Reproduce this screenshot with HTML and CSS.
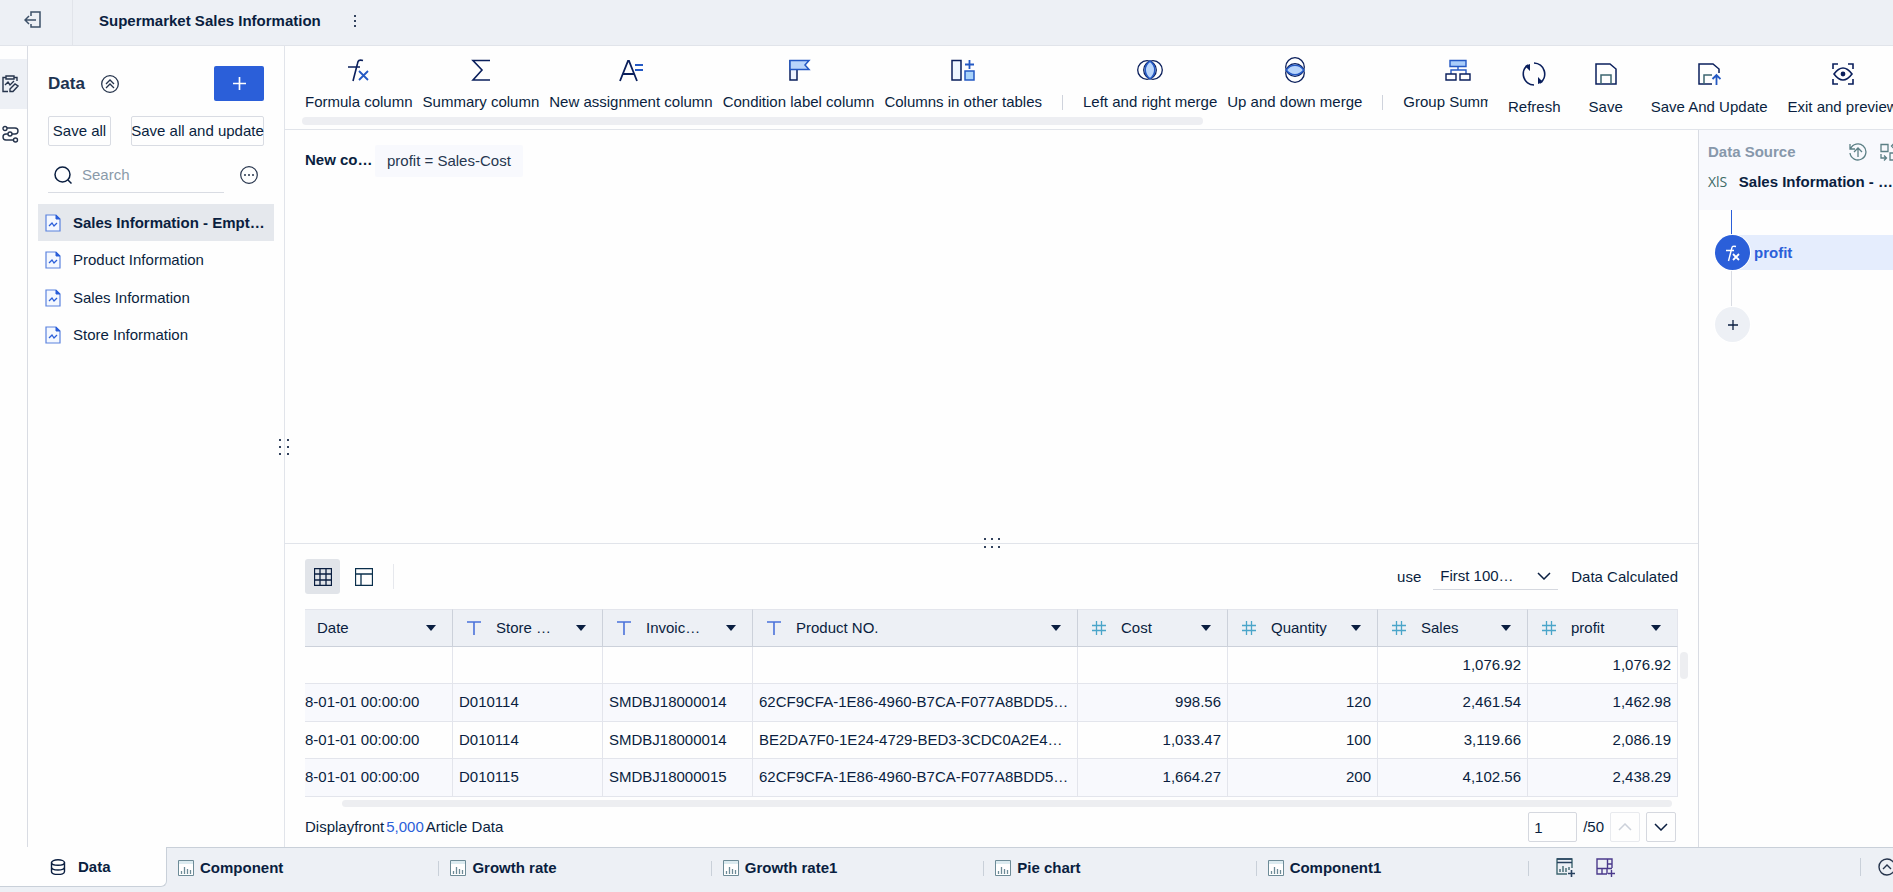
FILE: index.html
```html
<!DOCTYPE html>
<html lang="en">
<head>
    <meta charset="UTF-8">
    <meta name="viewport" content="width=device-width, initial-scale=1.0">
    <title>Supermarket Sales Information</title>
    <link rel="stylesheet" href="styles.css">
</head>
<body>
    <!-- shared icons -->
    <svg class="sprite" aria-hidden="true">
        <symbol id="i-file" viewBox="0 0 16 18"><path d="M1 1h10l4 4v12H1z" fill="#f4f8ff" stroke="#5a82de" stroke-width="1.2"/><path d="M11 1v4h4z" fill="#2b5fd9" stroke="#2b5fd9"/><path d="M4 12l3-3 2 3 3-3" fill="none" stroke="#2b5fd9" stroke-width="1.3"/></symbol>
        <symbol id="i-chart" viewBox="0 0 16 16"><path d="M.5.5h15v15H.5z" fill="#fff" stroke="#6d8b97"/><path d="M1 1h14v3H1z" fill="#dcebf0"/><path d="M3.5 14v-3M6.5 14V7M9.5 14V9M12.5 14v-4" stroke="#6d8b97" stroke-width="1.3"/></symbol>
        <symbol id="i-text" viewBox="0 0 14 14"><path d="M0 1h14M7 1v13" fill="none" stroke="#4a72da" stroke-width="1.6"/></symbol>
        <symbol id="i-num" viewBox="0 0 14 14"><path d="M0 4.500h14M0 9.500h14M4.500 0v14M9.500 0v14" fill="none" stroke="#4aa5c9" stroke-width="1.3"/></symbol>
        <symbol id="i-down" viewBox="0 0 14 8"><path d="M1 1l6 6 6-6" fill="none" stroke="currentColor" stroke-width="1.5"/></symbol>
        <symbol id="i-plus" viewBox="0 0 14 14"><path d="M7 0v14M0 7h14" stroke="currentColor" stroke-width="1.8"/></symbol>
        <symbol id="i-grip" viewBox="0 0 16 10"><path d="M0 0h2v2H0zM7 0h2v2H7zM14 0h2v2h-2zM0 8h2v2H0zM7 8h2v2H7zM14 8h2v2h-2z" fill="#33435e"/></symbol>
    </svg>

    <header class="topbar">
        <button class="exit" aria-label="Exit"><svg width="17" height="18" viewBox="0 0 17 18" fill="none" stroke="#3d5068" stroke-width="1.5"><path d="M7 5V1h9v15H7v-3M1 9h11M5 5L1 9l4 4"/></svg></button>
        <h1>Supermarket Sales Information</h1>
        <button class="more" aria-label="More"><svg width="4" height="12" viewBox="0 0 4 12" fill="#33435e"><path d="M1 0h2v2H1zM1 5h2v2H1zM1 10h2v2H1z"/></svg></button>
    </header>

    <div class="main">
        <nav class="rail">
            <button class="rail-item active" aria-label="Edit data"><svg width="17" height="18" viewBox="0 0 17 18" fill="none" stroke="#26344c" stroke-width="1.4"><path d="M6 16.500H1v-14h3M12 2.500h3V6M4 1h8v3H4zM3 10l3-3 2 3 4-4M8 14l5-5 3 2-5 5.500H8z"/></svg></button>
            <button class="rail-item" aria-label="Lineage"><svg width="17" height="18" viewBox="0 0 17 18" fill="none" stroke="#26344c" stroke-width="1.4"><circle cx="3" cy="3.500" r="2"/><circle cx="8" cy="9" r="2"/><circle cx="13.500" cy="15" r="2"/><path d="M5 3h8a3 3 0 0 1 0 6h-3M6 9H4a3 3 0 0 0 0 6h7.500"/></svg></button>
        </nav>

        <aside class="sidebar">
            <div class="side-head">
                <h2>Data</h2>
                <button class="collapse" aria-label="Collapse"><svg width="18" height="18" viewBox="0 0 18 18" fill="none" stroke="#26344c" stroke-width="1.3"><circle cx="9" cy="9" r="8.300"/><path d="M5 9l4-4 4 4M5 13l4-4 4 4"/></svg></button>
                <button class="add" aria-label="Add data"><svg width="13" height="13"><use href="#i-plus"/></svg></button>
            </div>
            <div class="side-save">
                <button class="save-all">Save all</button>
                <button class="save-update">Save all and update</button>
            </div>
            <div class="side-search">
                <label class="search">
                    <svg width="18" height="18" viewBox="0 0 18 18" fill="none" stroke="#0a1e40" stroke-width="1.5"><circle cx="8.500" cy="8.500" r="7.500"/><path d="M14 14l3.500 3.500"/></svg>
                    <input type="text" placeholder="Search" aria-label="Search">
                </label>
                <button aria-label="Options"><svg width="18" height="18" viewBox="0 0 18 18" fill="none" stroke="#26344c" stroke-width="1.2"><circle cx="9" cy="9" r="8.300"/><path d="M4 9h2M8 9h2M12 9h2" stroke-width="1.6"/></svg></button>
            </div>
            <ul class="files">
                <li><a href="#" class="selected"><svg width="16" height="18"><use href="#i-file"/></svg>Sales Information - Empt…</a></li>
                <li><a href="#"><svg width="16" height="18"><use href="#i-file"/></svg>Product Information</a></li>
                <li><a href="#"><svg width="16" height="18"><use href="#i-file"/></svg>Sales Information</a></li>
                <li><a href="#"><svg width="16" height="18"><use href="#i-file"/></svg>Store Information</a></li>
            </ul>
            <span class="grip-side"><svg width="10" height="16" viewBox="0 0 10 16" fill="#33435e"><path d="M0 0h2v2H0zM0 7h2v2H0zM0 14h2v2H0zM8 0h2v2H8zM8 7h2v2H8zM8 14h2v2H8z"/></svg></span>
        </aside>

        <div class="work">
            <div class="toolbar">
                <div class="tools">
                    <div class="tool-list">
                        <button class="tool"><svg width="26" height="26" viewBox="0 0 26 26" fill="none" stroke="#0a1f5c" stroke-width="1.6"><path d="M2 10h12M17 3.500c-4-1-5 0-5.500 3L7 24"/><path d="M13 14l9 9M22 14l-9 9" stroke="#2459c4" stroke-width="1.8"/></svg>Formula column</button>
                        <button class="tool"><svg width="26" height="26" viewBox="0 0 26 26" fill="none" stroke="#0a1f5c" stroke-width="1.6"><path d="M22 3.500H5l9 9.500-9 10h17"/></svg>Summary column</button>
                        <button class="tool"><svg width="26" height="26" viewBox="0 0 26 26" fill="none" stroke="#0a1f5c" stroke-width="1.8"><path d="M2 24l8-20h1l8 20M5 17h11"/><path d="M17 8h8M17 13h8" stroke="#2459c4"/></svg>New assignment column</button>
                        <button class="tool"><svg width="26" height="26" viewBox="0 0 26 26" fill="none" stroke="#0a1f5c" stroke-width="1.5"><path d="M4 3v20h7V12" fill="#eef4ff"/><path d="M4 3.500h19l-4 4.500 4 4.500H4z" fill="#b9d5fb" stroke="#2459c4"/></svg>Condition label column</button>
                        <button class="tool"><svg width="26" height="26" viewBox="0 0 26 26" fill="none" stroke="#0a1f5c" stroke-width="1.5"><path d="M2 3.500h9v19.500H2z" fill="#eef6ff"/><path d="M15 14h9v9h-9z" fill="#a9d3fa" stroke="#2459c4"/><path d="M19.500 3v9M15 7.500h9" stroke="#2459c4" stroke-width="1.8"/></svg>Columns in other tables</button>
                        <span class="sep"></span>
                        <button class="tool"><svg width="26" height="26" viewBox="0 0 26 26" fill="none" stroke="#0a1f5c" stroke-width="1.3"><circle cx="10" cy="13" r="9.300"/><circle cx="16" cy="13" r="9.300"/><path d="M13 4.200q4.800 3.500 4.800 8.800T13 21.800Q8.200 18.300 8.200 13T13 4.200z" fill="#b9d5fb" stroke="#2459c4" stroke-width="1.6"/></svg>Left and right merge</button>
                        <button class="tool"><svg width="26" height="26" viewBox="0 0 26 26" fill="none" stroke="#0a1f5c" stroke-width="1.3"><circle cx="13" cy="10" r="9.300"/><circle cx="13" cy="16" r="9.300"/><path d="M4.200 13q3.500-4.800 8.800-4.800t8.800 4.800q-3.500 4.800-8.800 4.800T4.200 13z" fill="#b9d5fb" stroke="#2459c4" stroke-width="1.6"/></svg>Up and down merge</button>
                        <span class="sep"></span>
                        <button class="tool"><svg width="26" height="26" viewBox="0 0 26 26" fill="none" stroke="#0a1f5c" stroke-width="1.4"><path d="M13 9v4M6 17v-4h15v4" stroke="#2459c4"/><path d="M5 3.500h16v6H5z" fill="#a9cdfa" stroke="#2459c4"/><path d="M1 17h10v6H1zM15 17h10v6H15z" fill="#fff"/></svg>Group Summary</button>
                    </div>
                    <div class="tool-scroll"></div>
                </div>
                <div class="actions">
                    <button><svg width="24" height="24" viewBox="0 0 24 24" fill="none" stroke="#0a1f5c" stroke-width="1.7"><path d="M12 23A11 11 0 0 1 6 3M12 1a11 11 0 0 1 6 20"/><path d="M3 4l5-2v7zM21 20l-5 2v-7z" fill="#0a1f5c" stroke="none"/></svg>Refresh</button>
                    <button><svg width="24" height="24" viewBox="0 0 24 24" fill="none" stroke="#0a1f5c" stroke-width="1.5"><path d="M2 2h14l6 5v15H2z"/><path d="M7 22v-9h10v9" stroke="#3c6570"/></svg>Save</button>
                    <button><svg width="24" height="24" viewBox="0 0 24 24" fill="none" stroke="#0a1f5c" stroke-width="1.5"><path d="M15 22H2V2h14l6 5v4"/><path d="M7 22v-9h8" stroke="#3c6570"/><path d="M19.500 23V13M15.500 17l4-4 4 4" stroke="#2459c4" stroke-width="1.8"/></svg>Save And Update</button>
                    <button><svg width="24" height="24" viewBox="0 0 24 24" fill="none" stroke="#0a1f5c" stroke-width="1.6"><path d="M2 7V2h5M17 2h5v5M22 17v5h-5M7 22H2v-5M3 12q9-12 18 0-9 12-18 0z"/><circle cx="12" cy="12" r="1.600" fill="#0a1f5c"/></svg>Exit and preview</button>
                </div>
            </div>

            <div class="panes">
                <main class="editor">
                    <section class="formula">
                        <b>New co…</b>
                        <span class="expr">profit = Sales-Cost</span>
                    </section>

                    <section class="preview">
                        <span class="grip"><svg width="16" height="10"><use href="#i-grip"/></svg></span>
                        <div class="view-bar">
                            <button class="view on" aria-label="Table view"><svg width="18" height="18" viewBox="0 0 18 18" fill="none" stroke="#0a1e40" stroke-width="1.3"><path d="M.5.500h17v17H.5zM.5 6h17M.5 12h17M6 .5v17M12 .5v17"/></svg></button>
                            <button class="view" aria-label="Layout view"><svg width="18" height="18" viewBox="0 0 18 18" fill="none" stroke="#0a2f4c" stroke-width="1.3"><path d="M.5.500h17v17H.5zM.5 6h17M6 6v11.500"/></svg></button>
                            <span class="view-sep"></span>
                            <label for="rows" class="use">use</label>
                            <span class="select">
                                <select id="rows"><option>First 100…</option></select>
                                <svg width="14" height="8"><use href="#i-down"/></svg>
                            </span>
                            <span>Data Calculated</span>
                        </div>

                        <div class="table-wrap">
                            <table>
                                <colgroup><col class="c-date"><col class="c"><col class="c"><col><col class="c"><col class="c"><col class="c"><col class="c"></colgroup>
                                <thead>
                                    <tr>
                                        <th><div class="th">Date<i></i></div></th>
                                        <th><div class="th"><svg width="14" height="14"><use href="#i-text"/></svg>Store …<i></i></div></th>
                                        <th><div class="th"><svg width="14" height="14"><use href="#i-text"/></svg>Invoic…<i></i></div></th>
                                        <th><div class="th"><svg width="14" height="14"><use href="#i-text"/></svg>Product NO.<i></i></div></th>
                                        <th><div class="th"><svg width="14" height="14"><use href="#i-num"/></svg>Cost<i></i></div></th>
                                        <th><div class="th"><svg width="14" height="14"><use href="#i-num"/></svg>Quantity<i></i></div></th>
                                        <th><div class="th"><svg width="14" height="14"><use href="#i-num"/></svg>Sales<i></i></div></th>
                                        <th><div class="th"><svg width="14" height="14"><use href="#i-num"/></svg>profit<i></i></div></th>
                                    </tr>
                                </thead>
                                <tbody>
                                    <tr><td></td><td></td><td></td><td></td><td></td><td></td><td>1,076.92</td><td>1,076.92</td></tr>
                                    <tr><td>8-01-01 00:00:00</td><td>D010114</td><td>SMDBJ18000014</td><td>62CF9CFA-1E86-4960-B7CA-F077A8BDD5…</td><td>998.56</td><td>120</td><td>2,461.54</td><td>1,462.98</td></tr>
                                    <tr><td>8-01-01 00:00:00</td><td>D010114</td><td>SMDBJ18000014</td><td>BE2DA7F0-1E24-4729-BED3-3CDC0A2E4…</td><td>1,033.47</td><td>100</td><td>3,119.66</td><td>2,086.19</td></tr>
                                    <tr><td>8-01-01 00:00:00</td><td>D010115</td><td>SMDBJ18000015</td><td>62CF9CFA-1E86-4960-B7CA-F077A8BDD5…</td><td>1,664.27</td><td>200</td><td>4,102.56</td><td>2,438.29</td></tr>
                                </tbody>
                            </table>
                            <div class="scroll-y"></div>
                        </div>
                        <div class="scroll-x"></div>

                        <div class="pager">
                            <span class="count"><span>Displayfront</span><em>5,000</em><span>Article Data</span></span>
                            <input type="text" value="1" aria-label="Page">
                            <span class="total">/50</span>
                            <button disabled aria-label="Previous page"><svg class="up" width="14" height="8"><use href="#i-down"/></svg></button>
                            <button aria-label="Next page"><svg width="14" height="8"><use href="#i-down"/></svg></button>
                        </div>
                    </section>
                </main>

                <aside class="source">
                    <div class="source-head">
                        <div class="source-title">
                            <h3>Data Source</h3>
                            <svg width="18" height="18" viewBox="0 0 18 18" fill="none" stroke="#5b7f85" stroke-width="1.3"><path d="M1 1v5h5M1.500 6A8 8 0 1 1 1 10M9 14V5M5 9l4-4 4 4"/></svg>
                            <svg width="18" height="18" viewBox="0 0 18 18" fill="none" stroke="#5b7f85" stroke-width="1.3"><path d="M1 1.500h7v7H1zM10 10h7v7h-7zM1 11v4h5M4 12.500L6.500 15 4 17.500M17 7V3h-4M14 .5L11.500 3 14 5.500"/></svg>
                        </div>
                        <div class="source-name"><span class="xls">XlS</span><b>Sales Information - …</b></div>
                    </div>
                    <div class="steps">
                        <span class="line blue"></span>
                        <a href="#" class="step"><span class="dot"><svg width="18" height="18" viewBox="0 0 18 18" fill="none" stroke="#fff" stroke-width="1.4"><path d="M2 6.500h8M12 2.500c-3-.7-4 0-4.300 2L4.500 17"/><path d="M9 10l6 6M15 10l-6 6" stroke-width="1.8"/></svg></span><span class="step-name">profit</span></a>
                        <span class="line"></span>
                        <button class="dot add-step" aria-label="Add step"><svg width="10" height="10"><use href="#i-plus"/></svg></button>
                    </div>
                </aside>
            </div>
        </div>
    </div>

    <footer class="tabbar">
        <a href="#" class="data-tab"><svg width="16" height="16" viewBox="0 0 16 16" fill="none" stroke="#0a1e40" stroke-width="1.4"><ellipse cx="8" cy="3.500" rx="6.500" ry="2.800"/><path d="M1.500 3.500v9c0 4 13 4 13 0v-9M1.500 8c0 4 13 4 13 0"/></svg>Data</a>
        <div class="tabs">
            <a href="#"><svg width="16" height="16"><use href="#i-chart"/></svg>Component</a>
            <a href="#"><svg width="16" height="16"><use href="#i-chart"/></svg>Growth rate</a>
            <a href="#"><svg width="16" height="16"><use href="#i-chart"/></svg>Growth rate1</a>
            <a href="#"><svg width="16" height="16"><use href="#i-chart"/></svg>Pie chart</a>
            <a href="#"><svg width="16" height="16"><use href="#i-chart"/></svg>Component1</a>
        </div>
        <div class="tab-tools">
            <button aria-label="Add component"><svg width="20" height="20" viewBox="0 0 20 20" fill="none" stroke="#3f6670" stroke-width="1.4"><path d="M11 16H1V1h15v9"/><path d="M1 1h15M1 4.500h15" stroke="#27415f"/><path d="M4 14v-3M7 14V8M10 14v-4M13 12V9"/><path d="M15.500 12v7M12 15.500h7" stroke="#27415f" stroke-width="1.6"/></svg></button>
            <button aria-label="Add dashboard"><svg width="20" height="20" viewBox="0 0 20 20" fill="none" stroke="#4b3a8c" stroke-width="1.4"><path d="M11 16H1V1h15v9M1 10.500h15M11.500 1v9.500M11.500 6H16M6 10.500V16M11 10.500V16M15.500 12v7M12 15.500h7"/></svg></button>
            <button class="expand" aria-label="Expand"><svg width="18" height="18" viewBox="0 0 18 18" fill="none" stroke="#26344c" stroke-width="1.4"><circle cx="9" cy="9" r="8"/><path d="M5 11l4-4 4 4"/></svg></button>
        </div>
    </footer>
</body>
</html>
```

FILE: styles.css
```css
* {
    box-sizing: border-box;
}
body {
    margin: 0;
    min-height: 100vh;
    display: flex;
    flex-direction: column;
    overflow-x: hidden;
    font: 15px/20px "Liberation Sans", Arial, sans-serif;
    color: #0a1e40;
    background: #fefefe;
}
h1, h2, h3, ul {
    margin: 0;
    padding: 0;
    font-size: 15px;
}
button, input, select {
    font: inherit;
    color: inherit;
    background: none;
    border: 0;
    padding: 0;
    margin: 0;
}
button {
    display: flex;
    align-items: center;
    justify-content: center;
    cursor: pointer;
    white-space: nowrap;
}
a {
    color: inherit;
    text-decoration: none;
}
svg {
    display: block;
    flex: none;
}
.sprite {
    display: none;
}

/* top bar */
.topbar {
    height: 46px;
    display: flex;
    align-items: center;
    background: #edf0f5;
    border-bottom: 1px solid #e1e4ea;
    padding-bottom: 4px;
}
.exit {
    width: 73px;
    height: 45px;
    padding-right: 7px;
    align-self: flex-start;
    border-right: 1px solid #e1e4ea;
    padding-bottom: 6px;
}
.topbar h1 {
    margin-left: 26px;
}
.more {
    margin-left: 32px;
}

.main {
    flex: 1;
    display: flex;
}

/* left rail */
.rail {
    width: 28px;
    padding-top: 13px;
    border-right: 1px solid #d9dce3;
}
.rail-item {
    width: 27px;
    height: 50px;
    padding-right: 7px;
}
.rail-item.active {
    background: #edf0f5;
}

/* data list */
.sidebar {
    position: relative;
    width: 257px;
    padding-top: 20px;
    border-right: 1px solid #e1e4ea;
}
.side-head, .side-save, .side-search {
    display: flex;
    align-items: center;
    padding: 0 20px;
}
.side-head h2 {
    font-size: 17px;
    color: #1d3350;
}
.collapse {
    margin-left: 16px;
}
.add {
    margin-left: auto;
    width: 50px;
    height: 35px;
    color: #fff;
    background: #2b5fd9;
    border-radius: 2px;
}
.side-save {
    justify-content: space-between;
    margin-top: 15px;
}
.side-save button {
    height: 30px;
    border: 1px solid #d9dce3;
    border-radius: 2px;
}
.save-all {
    width: 63px;
}
.save-update {
    width: 133px;
}
.side-search {
    margin-top: 11px;
    padding-right: 26px;
    justify-content: space-between;
}
.search {
    display: flex;
    align-items: center;
    gap: 10px;
    width: 176px;
    height: 36px;
    padding-left: 6px;
    border-bottom: 1px solid #d9dce3;
}
.search input {
    width: 130px;
    outline: none;
}
.search input::placeholder {
    color: #8a9aa9;
}
.files {
    display: grid;
    grid-template-rows: repeat(4, 1fr);
    height: 150px;
    margin: 11px 10px 0;
    list-style: none;
}
.files a {
    display: flex;
    align-items: center;
    gap: 12px;
    height: 37px;
    padding-left: 7px;
    white-space: nowrap;
}
.files .selected {
    font-weight: bold;
    background: #e5e8ed;
}
.grip-side {
    position: absolute;
    right: -5px;
    top: 50%;
    margin-top: -8px;
}

/* toolbar */
.work {
    flex: 1;
    min-width: 0;
    display: flex;
    flex-direction: column;
}
.toolbar {
    display: flex;
    height: 84px;
    border-bottom: 1px solid #e1e4ea;
}
.tools {
    flex: 1;
    min-width: 0;
    margin-left: 17px;
    padding-top: 11px;
    overflow: hidden;
}
.tool-list {
    display: flex;
    gap: 10px;
    padding-left: 3px;
}
.tool {
    flex: none;
    flex-direction: column;
    gap: 9px;
}
.sep {
    flex: none;
    align-self: flex-end;
    width: 1px;
    height: 15px;
    margin: 0 10px 2px;
    background: #cfd3dc;
}
.tool-scroll {
    width: 76%;
    height: 8px;
    margin-top: 5px;
    border-radius: 4px;
    background: #edeef2;
}
.actions {
    display: flex;
    align-items: flex-start;
    gap: 28px;
    width: 405px;
    padding: 16px 0 0 20px;
}
.actions button {
    flex-direction: column;
    gap: 11px;
    flex: none;
}
.actions button:last-child {
    margin-left: -8px;
}

/* formula area */
.panes {
    flex: 1;
    display: flex;
}
.editor {
    flex: 1;
    min-width: 0;
    display: flex;
    flex-direction: column;
}
.formula {
    flex: 1;
    display: flex;
    align-items: flex-start;
    gap: 2px;
    padding: 15px 20px;
}
.formula b {
    width: 68px;
    padding-top: 5px;
}
.expr {
    padding: 6px 12px;
    color: #26374f;
    background: #f8f9fd;
    border-radius: 2px;
}

/* data preview */
.preview {
    position: relative;
    padding: 15px 20px 5px;
    border-top: 1px solid #e1e4ea;
}
.grip {
    position: absolute;
    left: 50%;
    top: -6px;
    margin-left: -8px;
}
.view-bar {
    display: flex;
    align-items: center;
}
.view {
    width: 35px;
    height: 35px;
    margin-right: 6px;
    border-radius: 3px;
}
.view.on {
    background: #e1e4e9;
}
.view-sep {
    width: 1px;
    height: 25px;
    margin-left: 6px;
    background: #e6e8ed;
}
.use {
    margin-left: auto;
}
.select {
    position: relative;
    width: 125px;
    margin: 0 13px 0 12px;
    border-bottom: 1px solid #d5d8df;
}
.select select {
    width: 100%;
    height: 26px;
    padding-left: 7px;
    appearance: none;
    outline: none;
}
.select svg {
    position: absolute;
    right: 7px;
    top: 9px;
    pointer-events: none;
}
.table-wrap {
    position: relative;
    margin-top: 15px;
}
table {
    width: 100%;
    table-layout: fixed;
    border-collapse: separate;
    border-spacing: 0;
}
.c-date {
    width: 148px;
}
.c {
    width: 150px;
}
th, td {
    padding: 0 6px;
    border-right: 1px solid #e3e5ec;
    border-bottom: 1px solid #e3e5ec;
    white-space: nowrap;
    overflow: hidden;
}
th {
    height: 38px;
    padding: 0 16px 0 12px;
    font-weight: normal;
    text-align: left;
    background: #edf0f5;
    border-top: 1px solid #e3e5ec;
    border-right-color: #ccd1da;
    border-bottom-color: #ccd1da;
}
th:last-child {
    border-right-color: #e3e5ec;
}
.th {
    display: flex;
    align-items: center;
}
.th svg {
    margin: 0 15px 0 2px;
}
.th i {
    margin-left: auto;
    border: 5px solid transparent;
    border-top: 6px solid #0a1e40;
    border-bottom: 0;
}
td {
    height: 37px;
}
tbody tr:nth-child(even) td {
    height: 38px;
    padding-bottom: 2px;
    background: #f8f9fd;
}
td:first-child {
    padding-left: 0;
}
td:nth-child(n+5) {
    text-align: right;
}
.scroll-y {
    position: absolute;
    right: -10px;
    top: 43px;
    width: 8px;
    height: 27px;
    border-radius: 4px;
    background: #edeef1;
}
.scroll-x {
    height: 7px;
    margin: 3px 6px 0 37px;
    border-radius: 4px;
    background: #edeef1;
}
.pager {
    display: flex;
    align-items: center;
    margin-top: 5px;
}
.count {
    display: flex;
    gap: 2px;
    margin-right: auto;
}
.count em {
    font-style: normal;
    color: #2b5fd9;
}
.pager input, .pager button {
    height: 30px;
    border: 1px solid #d5d8df;
    border-radius: 2px;
}
.pager input {
    width: 49px;
    padding-left: 5px;
}
.total {
    margin: 0 6px;
}
.pager button {
    width: 30px;
    margin-right: 6px;
}
.pager button:last-child {
    margin-right: 2px;
}
.pager button:disabled {
    color: #ccd1da;
    border-color: #e8eaee;
}
.up {
    transform: rotate(180deg);
}

/* data source steps */
.source {
    width: 195px;
    border-left: 1px solid #d9dce3;
    overflow: hidden;
}
.source-head {
    height: 80px;
    padding: 12px 0 0 9px;
    background: #f8f9fd;
    white-space: nowrap;
}
.source-title {
    display: flex;
    align-items: center;
    gap: 13px;
}
.source-title h3 {
    flex: none;
    width: 128px;
    color: #8798ab;
}
.source-name {
    display: flex;
    align-items: center;
    margin-top: 10px;
}
.xls {
    width: 31px;
    font: 14px/20px "Open Sans", sans-serif;
    color: #3c6a66;
}
.steps {
    display: flex;
    flex-direction: column;
    padding-left: 16px;
}
.line {
    width: 1px;
    height: 37px;
    margin-left: 16px;
    background: #d9dce3;
}
.line.blue {
    height: 25px;
    background: #2b5fd9;
}
.step {
    display: flex;
    height: 35px;
}
.dot {
    display: flex;
    align-items: center;
    justify-content: center;
    width: 35px;
    height: 35px;
    border-radius: 50%;
    background: #2b5fd9;
    box-shadow: 0 0 0 1px #fff;
    z-index: 1;
}
.step-name {
    flex: 1;
    margin-left: -18px;
    padding-left: 22px;
    font-weight: bold;
    line-height: 36px;
    color: #2b5fd9;
    background: #e5edfd;
}
.add-step {
    background: #edf0f5;
}

/* bottom tabs */
.tabbar {
    display: flex;
    height: 45px;
    font-weight: bold;
    background: #edf0f5;
}
.data-tab {
    display: flex;
    align-items: center;
    gap: 12px;
    width: 167px;
    height: 40px;
    padding-left: 50px;
    background: #fefefe;
    border: 1px solid #c9d0d9;
    border-width: 0 1px 1px 0;
    border-bottom-right-radius: 6px;
}
.tabs {
    flex: 1;
    display: flex;
    border-top: 1px solid #c9d0d9;
}
.tabs a {
    flex: 1;
    display: flex;
    align-items: center;
    gap: 6px;
    height: 40px;
    padding-left: 11px;
}
.tabs a::after {
    content: "";
    width: 1px;
    height: 15px;
    margin-left: auto;
    background: #c9d0d9;
}
.tab-tools {
    display: flex;
    align-items: flex-start;
    gap: 20px;
    width: 364px;
    padding: 10px 0 0 27px;
    border-top: 1px solid #c9d0d9;
    overflow: hidden;
}
.expand {
    margin-left: auto;
    margin-right: -3px;
    padding-left: 17px;
    border-left: 1px solid #c9d0d9;
}
```
